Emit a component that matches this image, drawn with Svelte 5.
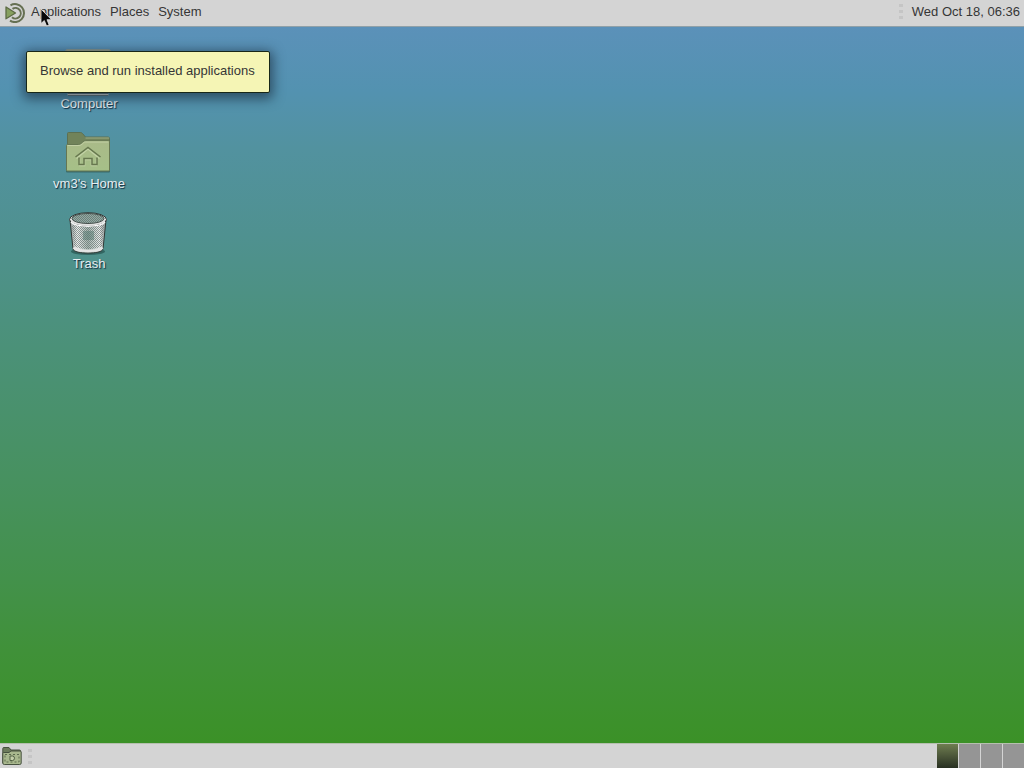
<script>
  const menus = ['Applications', 'Places', 'System'];
  const items = [
    { id: 'computer', label: 'Computer' },
    { id: 'home', label: "vm3's Home" },
    { id: 'trash', label: 'Trash' }
  ];
  const workspaces = [1, 2, 3, 4];
  let active = $state(1);
</script>

<div class="screen">
  <header class="panel top">
    <nav class="menus">
      <svg class="logo" width="20" height="20" viewBox="0 0 20 20" aria-hidden="true">
        <path d="M5.500 2.300A9 9 0 1 1 5 17.600" fill="none" stroke="#667052" stroke-width="2" />
        <path d="M7.500 5.800A5.300 5.300 0 1 1 7 14.200" fill="none" stroke="#667052" stroke-width="2" />
        <path d="M1 4L10.500 10L1 15.800Z" fill="#87a05f" stroke="#5d6b45" stroke-width="1.300" stroke-linejoin="round" />
      </svg>
      {#each menus as menu}
        <button class="menu">{menu}</button>
      {/each}
    </nav>
    <div class="status">
      <span class="grip"><i></i><i></i><i></i></span>
      <button class="clock">Wed Oct 18, 06:36</button>
    </div>
  </header>

  <main class="desktop">
    {#each items as item}
      <button class="item">
        {#if item.id === 'computer'}
          <svg width="48" height="48" viewBox="0 0 48 48" aria-hidden="true">
            <rect x="1.500" y="1.500" width="45" height="34" rx="2" fill="#9aa08c" stroke="#8b9a94" />
            <rect x="5" y="5" width="38" height="27" fill="#65775a" />
            <path d="M19 35h10v7H19z" fill="#a9ada2" />
            <path d="M4 46.500h40" stroke="#3b5560" stroke-width="3" />
            <path d="M3.500 46.500h41" stroke="#dfe6e2" stroke-width="1.500" />
          </svg>
        {:else if item.id === 'home'}
          <svg width="48" height="48" viewBox="0 0 48 48" aria-hidden="true">
            <defs>
              <linearGradient id="folder" x1="0" y1="0" x2="0" y2="1">
                <stop offset="0" stop-color="#a9ba88" />
                <stop offset="1" stop-color="#a6c088" />
              </linearGradient>
            </defs>
            <rect x="2" y="41" width="44" height="3.500" rx="1" fill="#274b45" opacity=".55" />
            <path d="M3.500 40V5.500q0-1 1-1H16.500q1 0 2 1l3 3.500H44q1.500 0 1.500 1.500V40Z" fill="#71835a" stroke="#5c7052" />
            <path d="M21.500 10H45" stroke="#9dad84" />
            <path d="M2.500 42V17.500q0-1 1-1H14.500q1.500 0 2.500-1l2-1.800q1-1 2.500-1H44.500q1 0 1 1V42q0 1-1 1h-41q-1 0-1-1Z" fill="url(#folder)" stroke="#657752" />
            <path d="M3.500 17.500H15q1.800 0 3-1.200l1.800-1.600q.7-.7 2-.7H44.500" fill="none" stroke="#c3d0a5" />
            <path d="M12.500 30.500L24 21L35.500 30.500M15.500 31v6.500h5v-6h7v6h5V31" fill="none" stroke="#c2d2a5" stroke-width="1.500" />
            <path d="M11.500 29L24 19.500L36.500 29M15 29.500v7h5v-6h8v6h5v-7" fill="none" stroke="#66774e" stroke-width="1.500" />
          </svg>
        {:else}
          <svg width="48" height="48" viewBox="0 0 48 48" aria-hidden="true">
            <defs>
              <linearGradient id="metal" x1="0" x2="1">
                <stop offset="0" stop-color="#8d9695" />
                <stop offset=".2" stop-color="#eceeed" />
                <stop offset=".5" stop-color="#a8b7b1" />
                <stop offset=".82" stop-color="#e9ebea" />
                <stop offset="1" stop-color="#858c8b" />
              </linearGradient>
              <pattern id="mesh" width="2" height="2" patternUnits="userSpaceOnUse">
                <path d="M0 0h1v1H0zM1 1H2V2H1z" fill="#53635f" opacity=".6" />
              </pattern>
            </defs>
            <ellipse cx="24" cy="43.500" rx="17" ry="3.500" fill="#153c38" opacity=".5" />
            <path d="M6 12L9 41c1 5.500 29 5.500 30 0l3-29Z" fill="url(#metal)" stroke="#303936" />
            <path d="M8 17l2 21c4 4 24 4 28 0l2-21Z" fill="url(#mesh)" />
            <path d="M19 23h11v9H19z" fill="#48736a" opacity=".4" />
            <path d="M9.500 39.500c4 4.500 25 4.500 29 0" fill="none" stroke="#e4e4e4" stroke-width="2.500" />
            <ellipse cx="24" cy="11.500" rx="18.500" ry="6.800" fill="#e0e1e0" stroke="#303735" />
            <ellipse cx="24" cy="10.500" rx="16" ry="5" fill="#93aaa3" stroke="#434c49" />
            <ellipse cx="24" cy="10.500" rx="15.500" ry="4.700" fill="url(#mesh)" />
            <path d="M7 14c5 5.500 29 5.500 34 0" fill="none" stroke="#f7f7f7" stroke-width="1.500" />
          </svg>
        {/if}
        <span>{item.label}</span>
      </button>
    {/each}
  </main>

  <footer class="panel bottom">
    <button class="show" aria-label="Show desktop">
      <svg width="20" height="20" viewBox="0 0 20 20" aria-hidden="true">
        <path d="M.8 17V2.500q0-1 1-1H7L9 4h8.500q1 0 1 1V17Z" fill="#6c7b5b" stroke="#46513f" />
        <path d="M.8 17V7.500q0-1 1-1H7l2-1.500h9q1.200 0 1.200 1V17q0 1.500-1.500 1.500H2.300Q.8 18.500.8 17Z" fill="#a8b78d" stroke="#46513f" />
        <rect x="3" y="8.500" width="14" height="7.500" fill="none" stroke="#5c6b4d" stroke-dasharray="2 2" />
        <path d="M8 10h2.500q2 0 2 2.200t-2 2.300H8z" fill="#c3cea9" stroke="#526044" />
      </svg>
    </button>
    <span class="grip"><i></i><i></i><i></i></span>
    <div class="windows"></div>
    <div class="pager">
      {#each workspaces as n}
        <button class:active={active === n} aria-label={`Workspace ${n}`} onclick={() => (active = n)}></button>
      {/each}
    </div>
  </footer>

  <div class="tooltip" role="tooltip">Browse and run installed applications</div>
  <svg class="pointer" width="14" height="20" viewBox="0 0 14 20" aria-hidden="true">
    <path d="M1 1V15.500L4.300 12.500L6.600 18L9.200 17L7 11.700H11.500Z" fill="#080808" stroke="#e8e8e8" stroke-width=".8" />
  </svg>
</div>

<style>
  :global(body) {
    margin: 0;
  }
  .screen {
    position: relative;
    display: flex;
    flex-direction: column;
    min-height: 100vh;
    overflow: hidden;
    font: 13px/16px "Liberation Sans", Arial, sans-serif;
    color: #363636;
    cursor: default;
  }
  button {
    margin: 0;
    padding: 0;
    border: 0;
    background: none;
    font: inherit;
    color: inherit;
  }
  .panel {
    display: flex;
    flex: none;
    align-items: center;
    box-sizing: border-box;
    background: #d4d4d4;
  }
  .top {
    justify-content: space-between;
    height: 27px;
    padding: 0 4px 3px 5px;
    border-bottom: 1px solid #8fa0a8;
  }
  .menus,
  .status {
    display: flex;
    align-items: center;
    gap: 9px;
  }
  .logo {
    margin-right: -3px;
    margin-top: 2px;
  }
  .grip {
    display: grid;
    gap: 3px;
  }
  .grip i {
    width: 4px;
    height: 3px;
    background: #c5c5c5;
  }
  .desktop {
    display: flex;
    flex: 1;
    flex-direction: column;
    align-items: flex-start;
    gap: 16px;
    padding: 21px 40px;
    background: linear-gradient(#5b91b9, #5392b0 9%, #52929f 17%, #4f9190 29%, #4b9178 45%, #479160 63%, #43914b 77%, #409139 87%, #3b9127);
  }
  .item {
    display: flex;
    flex-direction: column;
    align-items: center;
    width: 96px;
    color: #e6eef1;
    text-shadow: 1px 1px 1px #102a3c;
  }
  .item span {
    margin-left: 2px;
  }
  .bottom {
    height: 25px;
    border-top: 1px solid #b5bfae;
    padding-left: 2px;
  }
  .show {
    display: flex;
    margin-right: 6px;
  }
  .windows {
    flex: 1;
  }
  .pager {
    display: grid;
    grid-template-columns: repeat(4, 21px);
    gap: 1px;
    align-self: stretch;
    background: #d4d4d4;
  }
  .pager button {
    background: #959595;
  }
  .pager .active {
    background: linear-gradient(#6f7d50, #283022);
  }
  .tooltip {
    position: absolute;
    left: 26px;
    top: 51px;
    padding: 11px 14px 13px 13px;
    border: 1px solid #182718;
    border-radius: 2px;
    background: #f5f5b5;
    box-shadow: 0 3px 12px 3px rgba(20, 35, 50, 0.6);
    white-space: nowrap;
  }
  .pointer {
    position: absolute;
    left: 40px;
    top: 8px;
  }
</style>
